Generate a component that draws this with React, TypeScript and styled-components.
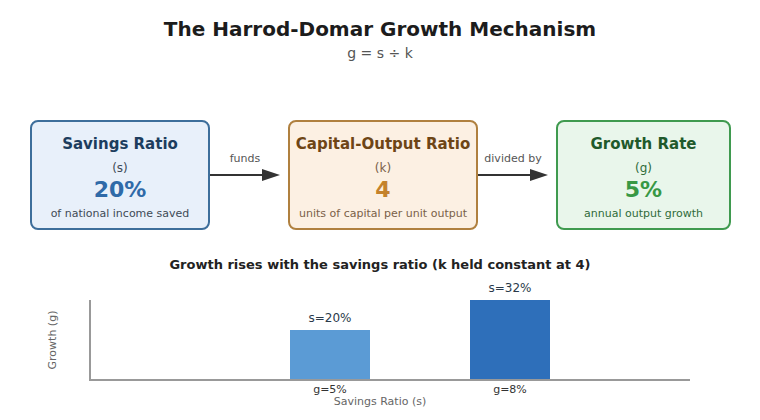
import * as React from "react";
import styled, { createGlobalStyle } from "styled-components";

const GlobalStyle = createGlobalStyle`
  html, body {
    margin: 0;
    padding: 0;
    background: #ffffff;
  }
  body {
    font-family: "DejaVu Sans", "Liberation Sans", sans-serif;
  }
`;

const Page = styled.div`
  width: 760px;
  height: 420px;
  display: flex;
  flex-direction: column;
  align-items: center;
  box-sizing: border-box;
  padding-top: 17px;
  background: #ffffff;
`;

const Title = styled.h1`
  margin: 0;
  font-size: 20px;
  line-height: 24px;
  font-weight: 700;
  color: #1c1c1c;
`;

const Subtitle = styled.div`
  margin-top: 4px;
  font-size: 14px;
  line-height: 16px;
  color: #555;
`;

const Flow = styled.div`
  align-self: stretch;
  display: flex;
  flex-direction: row;
  margin-top: 59px;
  padding-left: 30px;
  height: 110px;
`;

interface Tone {
  bg: string;
  border: string;
  title: string;
  value: string;
  text: string;
}

const tones: Record<string, Tone> = {
  blue: { bg: "#e8f0fa", border: "#3d6e9b", title: "#1c3d5e", value: "#2f6aa8", text: "#3e4a56" },
  orange: { bg: "#fcf0e3", border: "#b0803f", title: "#6e4516", value: "#c4822c", text: "#7a6048" },
  green: { bg: "#e9f6eb", border: "#3f9a4f", title: "#1f5a2b", value: "#389845", text: "#2f6b3a" },
};

const Box = styled.div<{ $tone: Tone; $width: number }>`
  width: ${(p) => p.$width}px;
  height: 110px;
  box-sizing: border-box;
  border: 2px solid ${(p) => p.$tone.border};
  border-radius: 8px;
  background: ${(p) => p.$tone.bg};
  display: flex;
  flex-direction: column;
  align-items: center;
  padding-top: 13px;
  flex-shrink: 0;
`;

const BoxTitle = styled.div<{ $color: string }>`
  font-size: 15px;
  line-height: 18px;
  font-weight: 700;
  color: ${(p) => p.$color};
  white-space: nowrap;
`;

const Symbol = styled.div<{ $color: string }>`
  margin-top: 7px;
  font-size: 12px;
  line-height: 16px;
  color: ${(p) => p.$color};
`;

const Value = styled.div<{ $color: string }>`
  margin-top: 1px;
  font-size: 22px;
  line-height: 26px;
  font-weight: 700;
  color: ${(p) => p.$color};
`;

const Caption = styled.div<{ $color: string }>`
  margin-top: 4px;
  font-size: 11px;
  line-height: 14px;
  color: ${(p) => p.$color};
  white-space: nowrap;
`;

const Connector = styled.div`
  width: 78px;
  flex-shrink: 0;
  display: flex;
  flex-direction: column;
  padding-top: 32px;
  box-sizing: border-box;
`;

const ConnectorLabel = styled.div`
  width: 70px;
  text-align: center;
  font-size: 11px;
  line-height: 14px;
  color: #555;
  white-space: nowrap;
  margin-bottom: 3px;
`;

const ChartTitle = styled.div`
  margin-top: 27px;
  font-size: 13px;
  line-height: 16px;
  font-weight: 700;
  color: #222;
`;

const ChartSvg = styled.svg`
  display: block;
  margin-top: 7px;
  font-family: "DejaVu Sans", "Liberation Sans", sans-serif;
`;

interface StageProps {
  tone: Tone;
  width: number;
  title: string;
  symbol: string;
  value: string;
  caption: string;
}

const Stage = ({ tone, width, title, symbol, value, caption }: StageProps) => (
  <Box $tone={tone} $width={width}>
    <BoxTitle $color={tone.title}>{title}</BoxTitle>
    <Symbol $color={tone.text}>{symbol}</Symbol>
    <Value $color={tone.value}>{value}</Value>
    <Caption $color={tone.text}>{caption}</Caption>
  </Box>
);

const Arrow = ({ label }: { label: string }) => (
  <Connector>
    <ConnectorLabel>{label}</ConnectorLabel>
    <svg width="70" height="12" viewBox="0 0 70 12">
      <line x1="0" y1="6" x2="56" y2="6" stroke="#333" strokeWidth="2" />
      <polygon points="52,0 70,6 52,12" fill="#333" />
    </svg>
  </Connector>
);

const bars = [
  { s: "s=20%", g: "g=5%", x: 290, h: 50, color: "#5b9bd5" },
  { s: "s=32%", g: "g=8%", x: 470, h: 80, color: "#2e6fba" },
];

const App = () => {
  const base = 100;
  return (
    <>
      <GlobalStyle />
      <Page>
        <Title>The Harrod-Domar Growth Mechanism</Title>
        <Subtitle>g = s ÷ k</Subtitle>
        <Flow>
          <Stage
            tone={tones.blue}
            width={180}
            title="Savings Ratio"
            symbol="(s)"
            value="20%"
            caption="of national income saved"
          />
          <Arrow label="funds" />
          <Stage
            tone={tones.orange}
            width={190}
            title="Capital-Output Ratio"
            symbol="(k)"
            value="4"
            caption="units of capital per unit output"
          />
          <Arrow label="divided by" />
          <Stage
            tone={tones.green}
            width={175}
            title="Growth Rate"
            symbol="(g)"
            value="5%"
            caption="annual output growth"
          />
        </Flow>
        <ChartTitle>Growth rises with the savings ratio (k held constant at 4)</ChartTitle>
        <ChartSvg width="760" height="130" viewBox="0 0 760 130">
          {bars.map((b) => (
            <g key={b.s}>
              <rect x={b.x} y={base - b.h} width="80" height={b.h} fill={b.color} />
              <text
                x={b.x + 40}
                y={base - b.h - 8}
                textAnchor="middle"
                fontSize="12"
                fill="#2a3a4a"
              >
                {b.s}
              </text>
              <text x={b.x + 40} y={113} textAnchor="middle" fontSize="11" fill="#333">
                {b.g}
              </text>
            </g>
          ))}
          <line x1="90" y1="20" x2="90" y2={base} stroke="#999" strokeWidth="2" />
          <line x1="89" y1={base} x2="690" y2={base} stroke="#999" strokeWidth="2" />
          <text x="380" y="125" textAnchor="middle" fontSize="11" fill="#666">
            Savings Ratio (s)
          </text>
          <text
            x="0"
            y="0"
            transform="translate(56 60) rotate(-90)"
            textAnchor="middle"
            fontSize="11"
            fill="#666"
          >
            Growth (g)
          </text>
        </ChartSvg>
      </Page>
    </>
  );
};

export default App;
